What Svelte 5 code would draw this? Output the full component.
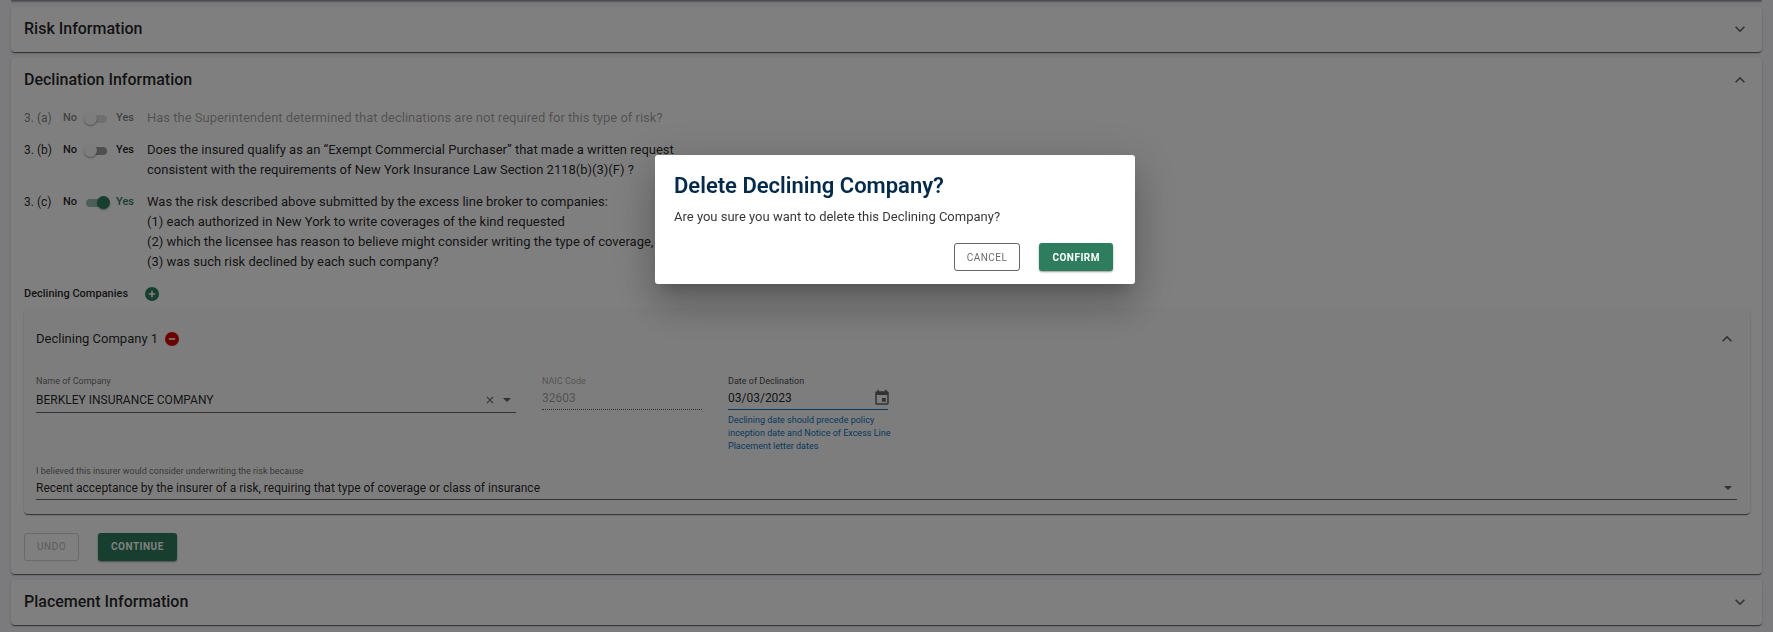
<script>
  let exempt = $state(false);
  let submitted = $state(true);
  let company = $state('BERKLEY INSURANCE COMPANY');
  let date = $state('03/03/2023');
</script>

{#snippet chevron(up)}
  <svg class="chevron" viewBox="0 0 24 24" aria-hidden="true">
    {#if up}
      <path d="M12 8l-6 6 1.41 1.41L12 10.83l4.59 4.58L18 14z" />
    {:else}
      <path d="M16.59 8.59L12 13.17 7.41 8.59 6 10l6 6 6-6z" />
    {/if}
  </svg>
{/snippet}

<main>
  <section class="card previous"></section>

  <section class="card">
    <header class="bar">
      <h2>Risk Information</h2>
      <button class="icon" aria-label="Expand Risk Information">{@render chevron(false)}</button>
    </header>
  </section>

  <section class="card">
    <header class="bar">
      <h2>Declination Information</h2>
      <button class="icon" aria-label="Collapse Declination Information">{@render chevron(true)}</button>
    </header>

    <div class="questions">
      <div class="question off">
        <span class="num">3. (a)</span>
        <label class="toggle"><span>No</span><input type="checkbox" disabled /><span class="yes">Yes</span></label>
        <p>Has the Superintendent determined that declinations are not required for this type of risk?</p>
      </div>
      <div class="question">
        <span class="num">3. (b)</span>
        <label class="toggle"><span>No</span><input type="checkbox" bind:checked={exempt} /><span class="yes">Yes</span></label>
        <p>
          Does the insured qualify as an “Exempt Commercial Purchaser” that made a written request<br />
          consistent with the requirements of New York Insurance Law Section 2118(b)(3)(F) ?
        </p>
      </div>
      <div class="question">
        <span class="num">3. (c)</span>
        <label class="toggle"><span>No</span><input type="checkbox" bind:checked={submitted} /><span class="yes">Yes</span></label>
        <p>
          Was the risk described above submitted by the excess line broker to companies:<br />
          (1) each authorized in New York to write coverages of the kind requested<br />
          (2) which the licensee has reason to believe might consider writing the type of coverage,<br />
          (3) was such risk declined by each such company?
        </p>
      </div>
    </div>

    <div class="companies">
      <h3>Declining Companies</h3>
      <button class="icon" aria-label="Add declining company">
        <svg class="round green" viewBox="0 0 14 14"><circle cx="7" cy="7" r="7" /><path d="M7 3.8v6.4M3.8 7h6.4" /></svg>
      </button>
    </div>

    <div class="card inner">
      <header class="inner-bar">
        <h4>Declining Company 1</h4>
        <button class="icon" aria-label="Delete declining company">
          <svg class="round red" viewBox="0 0 14 14"><circle cx="7" cy="7" r="7" /><path d="M3.8 7h6.4" /></svg>
        </button>
        <button class="icon end" aria-label="Collapse Declining Company 1">{@render chevron(true)}</button>
      </header>

      <div class="fields">
        <div class="field name">
          <label for="company">Name of Company</label>
          <div class="control tall">
            <input id="company" bind:value={company} />
            <button class="icon" aria-label="Clear company" onclick={() => (company = '')}>
              <svg class="clear" viewBox="0 0 9 9"><path d="M1 1l7 7M8 1L1 8" /></svg>
            </button>
            <button class="icon" aria-label="Show companies">
              <svg class="caret" viewBox="0 0 8 4"><path d="M0 0h8L4 4z" /></svg>
            </button>
          </div>
        </div>
        <div class="field short disabled">
          <label for="naic">NAIC Code</label>
          <div class="control"><input id="naic" value="32603" disabled /></div>
        </div>
        <div class="field short active">
          <label for="date">Date of Declination</label>
          <div class="control">
            <input id="date" bind:value={date} />
            <button class="icon" aria-label="Choose date">
              <svg class="calendar" viewBox="0 0 24 24"><path d="M17 12h-5v5h5v-5zM16 1v2H8V1H6v2H5c-1.11 0-1.99.9-1.99 2L3 19c0 1.1.89 2 2 2h14c1.1 0 2-.9 2-2V5c0-1.1-.9-2-2-2h-1V1h-2zm3 18H5V8h14v11z" /></svg>
            </button>
          </div>
          <p class="hint">Declining date should precede policy<br />inception date and Notice of Excess Line<br />Placement letter dates</p>
        </div>
      </div>

      <div class="field reason">
        <label for="reason">I believed this insurer would consider underwriting the risk because</label>
        <div class="control">
          <select id="reason">
            <option>Recent acceptance by the insurer of a risk, requiring that type of coverage or class of insurance</option>
          </select>
          <svg class="caret" viewBox="0 0 8 4" aria-hidden="true"><path d="M0 0h8L4 4z" /></svg>
        </div>
      </div>
    </div>

    <div class="actions">
      <button class="btn outline" disabled>UNDO</button>
      <button class="btn solid">CONTINUE</button>
    </div>
  </section>

  <section class="card">
    <header class="bar">
      <h2>Placement Information</h2>
      <button class="icon" aria-label="Expand Placement Information">{@render chevron(false)}</button>
    </header>
  </section>
</main>

<div class="scrim">
  <div class="dialog" role="dialog" aria-modal="true" aria-labelledby="dialog-title">
    <h1 id="dialog-title">Delete Declining Company?</h1>
    <p>Are you sure you want to delete this Declining Company?</p>
    <div class="dialog-actions">
      <button class="btn outline">CANCEL</button>
      <button class="btn solid">CONFIRM</button>
    </div>
  </div>
</div>

<style>
  :global(body) {
    margin: 0;
    background: #f6f6fb;
    color: rgba(0, 0, 0, 0.87);
    font-family: Roboto, sans-serif;
  }

  * {
    box-sizing: border-box;
  }

  h1, h2, h3, h4, p {
    margin: 0;
  }

  button, input, select {
    font: inherit;
    color: inherit;
  }

  main {
    display: flex;
    flex-direction: column;
    gap: 6px;
    padding: 0 11px 5px;
    font-size: 13px;
    line-height: 20px;
  }

  .card {
    border-radius: 4px;
    background: #fff;
    box-shadow: 0 2px 1px -1px rgba(0, 0, 0, 0.4), 0 1px 1px rgba(0, 0, 0, 0.28), 0 1px 3px rgba(0, 0, 0, 0.12);
  }

  .previous {
    height: 1px;
    border-radius: 0 0 4px 4px;
    background: #999;
  }

  .bar {
    display: flex;
    align-items: center;
    justify-content: space-between;
    height: 45px;
    padding: 0 12px 2px 13px;
  }

  h2 {
    font-size: 16px;
    font-weight: 500;
  }

  .icon {
    display: flex;
    flex: none;
    align-items: center;
    justify-content: center;
    padding: 0;
    border: 0;
    background: none;
    cursor: pointer;
  }

  .chevron {
    width: 20px;
    height: 20px;
    fill: rgba(0, 0, 0, 0.6);
  }

  .questions {
    display: flex;
    flex-direction: column;
    gap: 12px;
    padding: 5px 13px 0;
  }

  .question {
    display: grid;
    grid-template-columns: 39px 84px 1fr;
  }

  .num {
    font-size: 12px;
    font-weight: 400;
  }

  .toggle {
    display: flex;
    align-items: center;
    height: 20px;
    font-size: 11px;
    font-weight: 500;
  }

  .toggle input {
    appearance: none;
    position: relative;
    width: 21px;
    height: 8px;
    margin: 1px 9px 0 9px;
    border-radius: 4px;
    background: rgba(0, 0, 0, 0.38);
  }

  .toggle input::before {
    content: '';
    position: absolute;
    top: -3px;
    left: -2px;
    width: 13px;
    height: 13px;
    border-radius: 50%;
    background: #fafafa;
    box-shadow: 0 1px 1px rgba(0, 0, 0, 0.25), 0 1px 3px rgba(0, 0, 0, 0.15);
  }

  .toggle input:checked {
    background: #97bfae;
  }

  .toggle input:checked::before {
    left: 11px;
    background: #2e7d5e;
  }

  .toggle input:checked + .yes {
    color: #2e7d5e;
  }

  .off {
    color: rgba(0, 0, 0, 0.38);
  }

  .off .toggle,
  .off .num {
    color: rgba(0, 0, 0, 0.5);
  }

  .off .toggle input {
    background: rgba(0, 0, 0, 0.12);
  }

  .companies {
    display: flex;
    align-items: center;
    gap: 17px;
    padding: 12px 13px 5px;
  }

  h3 {
    font-size: 11px;
    font-weight: 500;
  }

  .round {
    width: 14px;
    height: 14px;
    stroke: #fff;
    stroke-width: 1.6;
  }

  .round circle {
    stroke: none;
  }

  .green {
    fill: #2e7d5e;
  }

  .red {
    fill: #d90000;
  }

  .inner {
    margin: 0 12px 0 13px;
    padding: 10px 13px 14px 12px;
    background: #fbfbfb;
  }

  .inner-bar {
    display: flex;
    align-items: center;
    gap: 7px;
    height: 40px;
  }

  h4 {
    font-size: 13px;
    font-weight: 400;
  }

  .end {
    margin-left: auto;
  }

  .fields {
    display: flex;
    align-items: flex-start;
    gap: 26px;
    height: 90px;
    margin-top: 16px;
  }

  .field {
    min-width: 0;
  }

  .field label {
    display: block;
    font-size: 9px;
    line-height: 12px;
    color: rgba(0, 0, 0, 0.6);
  }

  .control {
    display: flex;
    align-items: center;
    gap: 9px;
    height: 23px;
    border-bottom: 1px solid rgba(0, 0, 0, 0.6);
    font-size: 12px;
  }

  .tall {
    height: 26px;
    padding-right: 5px;
  }

  .control input,
  .control select {
    flex: 1;
    min-width: 0;
    padding: 0;
    border: 0;
    outline: 0;
    background: none;
    appearance: none;
  }

  .name {
    flex: 0 1 480px;
  }

  .short {
    flex: 0 1 160px;
  }

  .field.disabled label,
  .disabled input {
    color: rgba(0, 0, 0, 0.38);
  }

  .disabled .control {
    border-bottom: 1px dotted rgba(0, 0, 0, 0.6);
  }

  .active .control {
    border-bottom: 1px solid #0b72c4;
  }

  .field.active label {
    color: rgba(0, 0, 0, 0.75);
  }

  .hint {
    padding-top: 4px;
    font-size: 9px;
    line-height: 13px;
    white-space: nowrap;
    color: #0b72c4;
  }

  .clear {
    width: 8px;
    height: 8px;
    fill: none;
    stroke: rgba(0, 0, 0, 0.6);
    stroke-width: 1.2;
  }

  .caret {
    width: 8px;
    height: 4px;
    fill: rgba(0, 0, 0, 0.6);
  }

  .calendar {
    width: 18px;
    height: 18px;
    margin-right: -3px;
    fill: rgba(0, 0, 0, 0.6);
  }

  .reason .control {
    padding-right: 5px;
  }

  .actions {
    display: flex;
    gap: 19px;
    padding: 19px 13px 13px;
  }

  .btn {
    height: 28px;
    padding: 0 12px;
    border: 1px solid transparent;
    border-radius: 3px;
    font-size: 10px;
    letter-spacing: 0.05em;
  }

  .outline {
    border-color: rgba(0, 0, 0, 0.6);
    background: none;
    color: rgba(0, 0, 0, 0.6);
  }

  .outline:disabled {
    border-color: rgba(0, 0, 0, 0.16);
    color: rgba(0, 0, 0, 0.26);
    font-weight: 500;
  }

  .solid {
    background: #2e7d5e;
    color: #fff;
    font-weight: 700;
    box-shadow: 0 1px 2px rgba(0, 0, 0, 0.4);
  }

  .scrim {
    position: fixed;
    inset: 0;
    display: flex;
    align-items: flex-start;
    justify-content: center;
    padding: 155px 0 0 17px;
    background: rgba(0, 0, 0, 0.5);
  }

  .dialog {
    width: 480px;
    padding: 17px 22px 13px 19px;
    border-radius: 3px;
    background: #fff;
    box-shadow: 0 11px 15px -7px rgba(0, 0, 0, 0.2), 0 24px 38px 3px rgba(0, 0, 0, 0.14), 0 9px 46px 8px rgba(0, 0, 0, 0.12);
  }

  h1 {
    font-size: 22px;
    font-weight: 600;
    line-height: 28px;
    color: #042a4a;
  }

  .dialog p {
    padding-top: 7px;
    font-size: 13px;
    line-height: 20px;
    color: rgba(0, 0, 0, 0.8);
  }

  .dialog-actions {
    display: flex;
    justify-content: flex-end;
    gap: 19px;
    padding-top: 16px;
  }
</style>
